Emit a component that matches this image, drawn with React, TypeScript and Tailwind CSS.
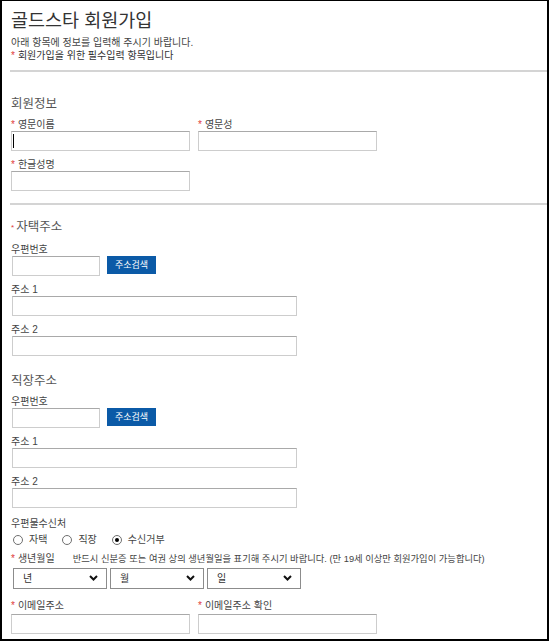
import React from 'react';

const font = "font-['Liberation_Sans','Noto_Sans_CJK_KR',sans-serif]";
const inputCls = 'block h-[20px] border border-[#cdcdcd] border-t-[#a9a9a9] bg-white';

const Star = () => <span className="text-[#e03a3a] mr-[3px]">*</span>;

const Label = ({ children, req, className = '' }: { children: React.ReactNode; req?: boolean; className?: string }) => (
  <div className={`text-[10px] leading-[12px] text-[#444] ${className}`}>
    {req && <Star />}
    {children}
  </div>
);

const Heading = ({ children, className = '' }: { children: React.ReactNode; className?: string }) => (
  <div className={`text-[12.5px] leading-[18px] text-[#555] ${className}`}>{children}</div>
);

const Rule = ({ className = '' }: { className?: string }) => (
  <div className={`h-[2px] bg-[#d4d4d4] -ml-px ${className}`} />
);

const AddressBlock = ({ first }: { first?: boolean }) => (
  <>
    <Label className={first ? 'mt-[7px]' : 'mt-[6px]'}>우편번호</Label>
    <div className="flex items-start gap-[7px] ml-px">
      <div className={`${inputCls} w-[88px]`} />
      <button className="h-[18px] w-[49px] bg-[#0b5aa7] text-white text-[9px] leading-[18px]">주소검색</button>
    </div>
    <Label className="mt-[8px]">주소 1</Label>
    <div className={`${inputCls} w-[285px] ml-px`} />
    <Label className="mt-[8px]">주소 2</Label>
    <div className={`${inputCls} w-[285px] ml-px`} />
  </>
);

const Radio = ({ label, checked }: { label: string; checked?: boolean }) => (
  <label className="flex items-center gap-[6px] text-[10px] text-[#444]">
    <span className="w-[10px] h-[10px] rounded-full border border-[#6f6f6f] bg-white flex items-center justify-center">
      {checked && <span className="w-[4px] h-[4px] rounded-full bg-black" />}
    </span>
    {label}
  </label>
);

const Select = ({ label }: { label: string }) => (
  <div className="w-[94px] h-[21px] border border-[#8c8c8c] bg-white flex items-center justify-between pl-[9px] pr-[8px] text-[10px] text-[#333]">
    <span>{label}</span>
    <svg width="9" height="6" viewBox="0 0 9 6">
      <polyline points="1,1 4.5,4.5 8,1" fill="none" stroke="#111" strokeWidth="2" />
    </svg>
  </div>
);

export default function App() {
  return (
    <div className={`${font} h-[641px] overflow-hidden bg-white border-2 border-t border-black pl-[9px] text-[#333]`}>
      <div className="pt-[8px] text-[18.5px] leading-[24px] text-[#333]">골드스타 회원가입</div>
      <div className="mt-[3px] text-[10px] leading-[13px] text-[#444]">아래 항목에 정보를 입력해 주시기 바랍니다.</div>
      <div className="text-[10px] leading-[13px] text-[#333]">
        <Star />
        회원가입을 위한 필수입력 항목입니다
      </div>
      <Rule className="mt-[8px]" />

      <Heading className="mt-[23px]">회원정보</Heading>
      <div className="mt-[6px] flex gap-[8px]">
        <div>
          <Label req>영문이름</Label>
          <div className="relative">
            <div className={`${inputCls} w-[179px] border-[#7ea6d4]`} />
            <div className="absolute left-[2px] top-[3px] w-px h-[14px] bg-black" />
          </div>
        </div>
        <div>
          <Label req>영문성</Label>
          <div className={`${inputCls} w-[179px]`} />
        </div>
      </div>
      <Label req className="mt-[8px]">한글성명</Label>
      <div className={`${inputCls} w-[179px]`} />
      <Rule className="mt-[12px]" />

      <Heading className="mt-[13px]">
        <span className="text-[#e03a3a] text-[8px] align-middle mr-[2px]">*</span>자택주소
      </Heading>
      <AddressBlock first />

      <Heading className="mt-[16px]">직장주소</Heading>
      <AddressBlock />

      <Label className="mt-[10px]">우편물수신처</Label>
      <div className="mt-[3px] h-[14px] flex items-center gap-[15px] ml-[2px]">
        <Radio label="자택" />
        <Radio label="직장" />
        <Radio label="수신거부" checked />
      </div>

      <Label req className="mt-[6px]">
        생년월일
        <span className="ml-[18px] text-[9.3px]">반드시 신분증 또는 여권 상의 생년월일을 표기해 주시기 바랍니다. (만 19세 이상만 회원가입이 가능합니다)</span>
      </Label>
      <div className="mt-[3px] ml-[2px] flex gap-[3px]">
        <Select label="년" />
        <Select label="월" />
        <Select label="일" />
      </div>

      <div className="mt-[11px] flex gap-[8px]">
        <div>
          <Label req>이메일주소</Label>
          <div className={`${inputCls} w-[179px] mt-[2px]`} />
        </div>
        <div>
          <Label req>이메일주소 확인</Label>
          <div className={`${inputCls} w-[179px] mt-[2px]`} />
        </div>
      </div>
    </div>
  );
}
